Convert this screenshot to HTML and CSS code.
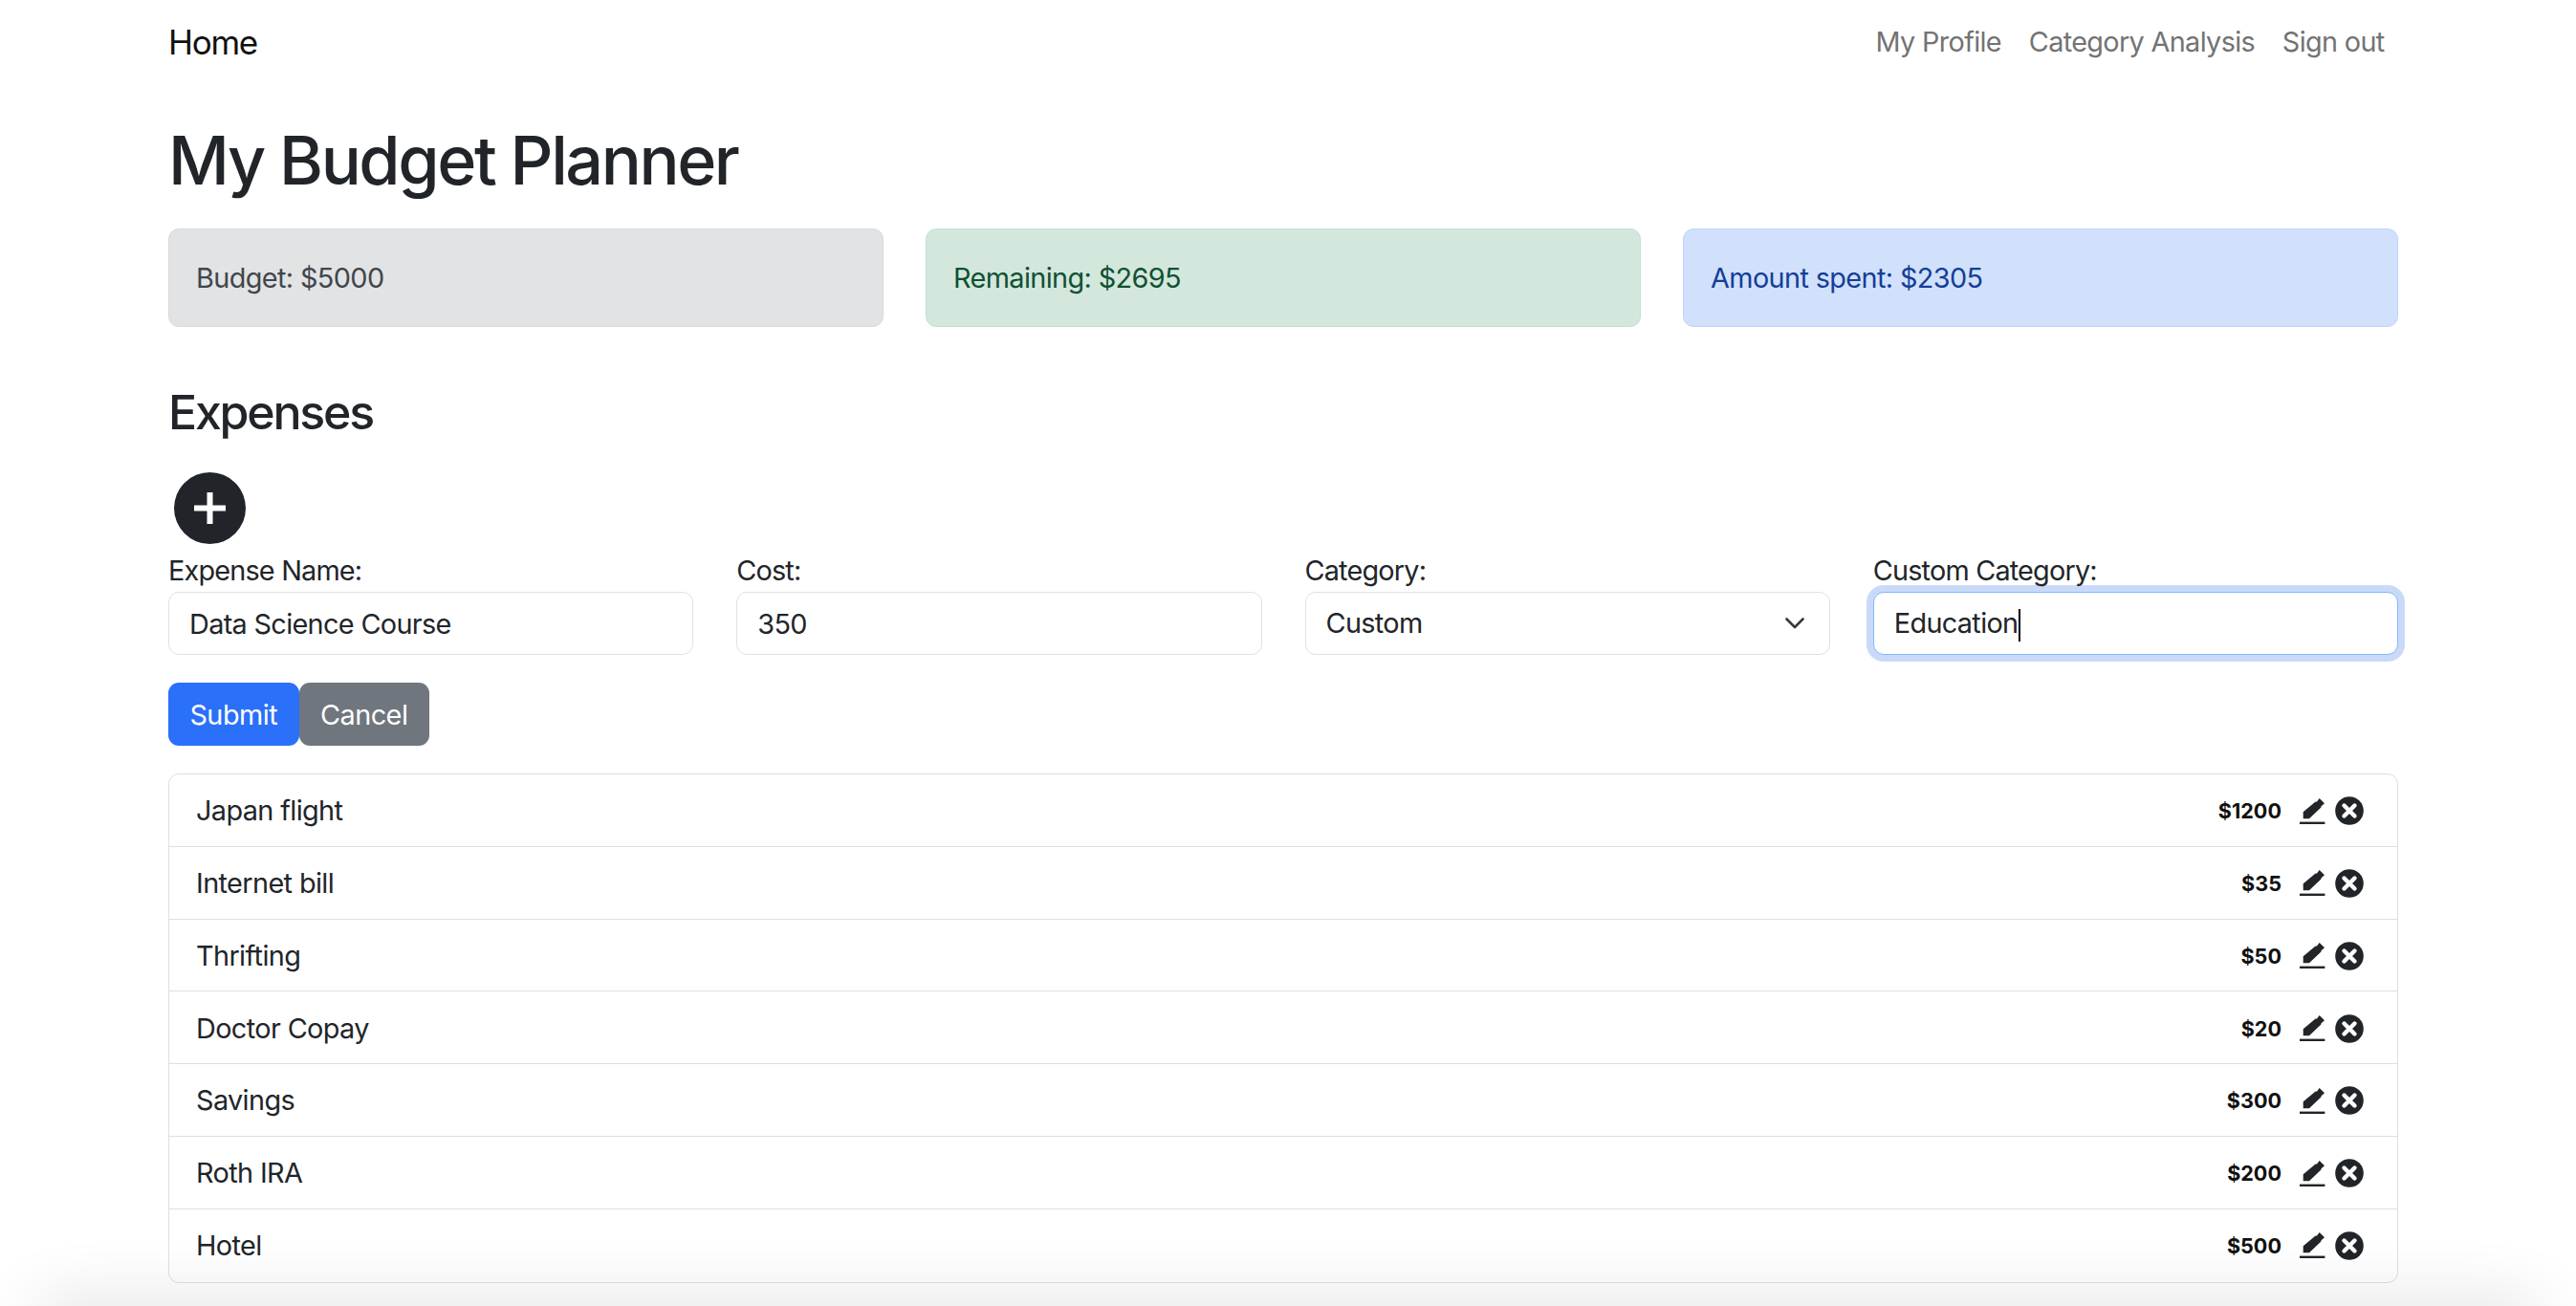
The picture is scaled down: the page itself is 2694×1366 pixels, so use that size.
FILE: index.html
```html
<!DOCTYPE html>
<html lang="en">
<head>
  <meta charset="UTF-8">
  <title>My Budget Planner</title>
  <link rel="stylesheet" href="styles.css">
</head>
<body>
  <div class="container">
    <nav class="navbar">
      <a class="brand" href="#">Home</a>
      <div class="nav-links">
        <a href="#">My Profile</a>
        <a href="#">Category Analysis</a>
        <a href="#">Sign out</a>
      </div>
    </nav>

    <h1>My Budget Planner</h1>

    <div class="summary">
      <div class="alert alert-gray">Budget: $5000</div>
      <div class="alert alert-green">Remaining: $2695</div>
      <div class="alert alert-blue">Amount spent: $2305</div>
    </div>

    <h2>Expenses</h2>

    <button class="add-button" title="Add expense">
      <svg width="33" height="33" viewBox="0 0 33 33"><path d="M13.5 0h6v13.5H33v6H19.5V33h-6V19.5H0v-6h13.5z" fill="#fff"/></svg>
    </button>

    <form class="expense-form">
      <div class="field">
        <label for="name">Expense Name:</label>
        <input id="name" class="input-field" type="text" value="Data Science Course">
      </div>
      <div class="field">
        <label for="cost">Cost:</label>
        <input id="cost" class="input-field" type="text" value="350">
      </div>
      <div class="field">
        <label for="category">Category:</label>
        <select id="category" class="input-field select-field">
          <option>Custom</option>
        </select>
      </div>
      <div class="field">
        <label>Custom Category:</label>
        <div class="input-field input-focus">Education<span class="caret"></span></div>
      </div>
    </form>

    <div class="form-buttons">
      <button class="button button-blue">Submit</button>
      <button class="button button-gray">Cancel</button>
    </div>

    <ul class="expense-list">
      <li>
        <span>Japan flight</span>
        <div class="row-right">
          <span class="badge">$1200</span>
          <svg class="icon-edit" width="27" height="27" viewBox="0 0 27 27"><use href="#pencil"/></svg>
          <svg class="icon-delete" width="30" height="30" viewBox="0 0 30 30"><use href="#cross"/></svg>
        </div>
      </li>
      <li>
        <span>Internet bill</span>
        <div class="row-right">
          <span class="badge">$35</span>
          <svg class="icon-edit" width="27" height="27" viewBox="0 0 27 27"><use href="#pencil"/></svg>
          <svg class="icon-delete" width="30" height="30" viewBox="0 0 30 30"><use href="#cross"/></svg>
        </div>
      </li>
      <li>
        <span>Thrifting</span>
        <div class="row-right">
          <span class="badge">$50</span>
          <svg class="icon-edit" width="27" height="27" viewBox="0 0 27 27"><use href="#pencil"/></svg>
          <svg class="icon-delete" width="30" height="30" viewBox="0 0 30 30"><use href="#cross"/></svg>
        </div>
      </li>
      <li>
        <span>Doctor Copay</span>
        <div class="row-right">
          <span class="badge">$20</span>
          <svg class="icon-edit" width="27" height="27" viewBox="0 0 27 27"><use href="#pencil"/></svg>
          <svg class="icon-delete" width="30" height="30" viewBox="0 0 30 30"><use href="#cross"/></svg>
        </div>
      </li>
      <li>
        <span>Savings</span>
        <div class="row-right">
          <span class="badge">$300</span>
          <svg class="icon-edit" width="27" height="27" viewBox="0 0 27 27"><use href="#pencil"/></svg>
          <svg class="icon-delete" width="30" height="30" viewBox="0 0 30 30"><use href="#cross"/></svg>
        </div>
      </li>
      <li>
        <span>Roth IRA</span>
        <div class="row-right">
          <span class="badge">$200</span>
          <svg class="icon-edit" width="27" height="27" viewBox="0 0 27 27"><use href="#pencil"/></svg>
          <svg class="icon-delete" width="30" height="30" viewBox="0 0 30 30"><use href="#cross"/></svg>
        </div>
      </li>
      <li>
        <span>Hotel</span>
        <div class="row-right">
          <span class="badge">$500</span>
          <svg class="icon-edit" width="27" height="27" viewBox="0 0 27 27"><use href="#pencil"/></svg>
          <svg class="icon-delete" width="30" height="30" viewBox="0 0 30 30"><use href="#cross"/></svg>
        </div>
      </li>
    </ul>
  </div>

  <!-- window shadow along the bottom edge -->
  <div class="window-shadow"></div>

  <svg class="icon-defs" width="0" height="0">
    <symbol id="pencil" viewBox="0 0 27 27">
      <path d="M3.7 21.3v-7L16.6 3.4l1.2 0.3L20.7 0 26 5.3l-3.4 2.9-0.2 1.2L10 21.3z" fill="#212529"/>
      <rect x="0" y="24.6" width="26.4" height="2.4" fill="#212529"/>
    </symbol>
    <symbol id="cross" viewBox="0 0 30 30">
      <circle cx="15" cy="15" r="14.8" fill="#212529"/>
      <path d="M9.5 9.5l11 11M20.5 9.5l-11 11" stroke="#fff" stroke-width="4.4" stroke-linecap="round"/>
    </symbol>
  </svg>
</body>
</html>
```

FILE: styles.css
```css
html, body {
  margin: 0;
  height: 1366px;
  overflow: hidden;
}

body {
  position: relative;
  font-family: Inter, "Liberation Sans", sans-serif;
  font-size: 28.8px;
  line-height: 40px;
  letter-spacing: -0.6px;
  color: #212529;
  background-color: #fff;
}

.container {
  width: 2332px;
  margin-left: 176px;
}

a {
  text-decoration: none;
}

.navbar {
  height: 88px;
  display: flex;
  justify-content: space-between;
  align-items: center;
}

.brand {
  font-size: 35px;
  letter-spacing: -1.3px;
  color: #111;
}

.nav-links {
  display: flex;
  gap: 28.8px;
  padding-right: 14.4px;
}

.nav-links a {
  color: #737373;
  letter-spacing: -0.65px;
}

h1 {
  margin: 37px 0 28px;
  font-size: 70px;
  font-weight: 550;
  line-height: 86px;
  letter-spacing: -2.4px;
}

.summary {
  display: grid;
  grid-template-columns: repeat(3, 1fr);
  gap: 44px;
}

.alert {
  height: 103px;
  box-sizing: border-box;
  padding: 0 28px;
  display: flex;
  align-items: center;
  border: 1.8px solid;
  border-radius: 11px;
}

.alert-gray {
  background-color: #e2e3e5;
  border-color: #d9dadd;
  color: #41464b;
}

.alert-green {
  background-color: #d4e7dd;
  border-color: #c3dfd2;
  color: #0f5132;
}

.alert-blue {
  background-color: #d1e1fc;
  border-color: #bed4f8;
  color: #153e96;
}

h2 {
  margin: 59px 0 0;
  font-size: 50px;
  font-weight: 550;
  line-height: 60px;
  letter-spacing: -2.2px;
}

.add-button {
  display: flex;
  align-items: center;
  justify-content: center;
  width: 75px;
  height: 75px;
  margin: 33px 0 10px 5.5px;
  padding: 0;
  border: none;
  border-radius: 50%;
  background-color: #212529;
}

.expense-form {
  display: grid;
  grid-template-columns: repeat(4, 1fr);
  gap: 45px;
}

.field label {
  display: block;
  line-height: 36px;
  margin-bottom: 4px;
  letter-spacing: -0.8px;
}

.input-field {
  display: block;
  box-sizing: border-box;
  width: 100%;
  height: 66px;
  padding: 0 21px;
  border: 1.8px solid #dee2e6;
  border-radius: 11px;
  background-color: #fff;
  color: #212529;
  font-family: inherit;
  font-size: 28.8px;
  line-height: 62px;
  letter-spacing: -0.65px;
}

.select-field {
  appearance: none;
  background-image: url("data:image/svg+xml,%3csvg xmlns='http://www.w3.org/2000/svg' viewBox='0 0 20 12'%3e%3cpath fill='none' stroke='%23343a40' stroke-width='2.6' stroke-linecap='round' stroke-linejoin='round' d='M1.5 1.5L10 10l8.5-8.5'/%3e%3c/svg%3e");
  background-repeat: no-repeat;
  background-position: right 26px center;
  background-size: 20px 12px;
}

.input-focus {
  border-color: #86b7fe;
  box-shadow: 0 0 0 7px #c9daf9;
  line-height: 64px;
}

.caret {
  display: inline-block;
  width: 2px;
  height: 34px;
  margin-left: 1px;
  background-color: #000;
  vertical-align: middle;
}

.form-buttons {
  display: flex;
  margin-top: 29px;
}

.button {
  height: 66px;
  padding: 0 22.4px;
  border: none;
  border-radius: 11px;
  color: #fff;
  font-family: inherit;
  font-size: 28.8px;
  letter-spacing: -0.5px;
}

.button-blue {
  background-color: #2a70f9;
}

.button-gray {
  background-color: #70767e;
}

.expense-list {
  margin: 29px 0 0;
  padding: 0;
  list-style: none;
  border: 1.8px solid #dfdfdf;
  border-radius: 11px;
}

.expense-list li {
  height: 75.8px;
  box-sizing: border-box;
  padding: 1.5px 29px 0 28px;
  display: flex;
  justify-content: space-between;
  align-items: center;
  border-bottom: 1.8px solid #dfdfdf;
}

.expense-list li:last-child {
  padding-top: 0;
  border-bottom: none;
}

.row-right {
  display: flex;
  align-items: center;
}

.badge {
  font-size: 21.6px;
  font-weight: 700;
  letter-spacing: 0;
  color: #111;
}

.icon-edit {
  margin-left: 19px;
}

.icon-delete {
  margin-left: 10px;
  margin-right: 6px;
}

.icon-defs {
  position: absolute;
}

.window-shadow {
  position: absolute;
  left: 40px;
  right: 40px;
  top: 1366px;
  height: 40px;
  box-shadow: 0 0 70px rgba(0, 0, 0, 0.16);
}
```
